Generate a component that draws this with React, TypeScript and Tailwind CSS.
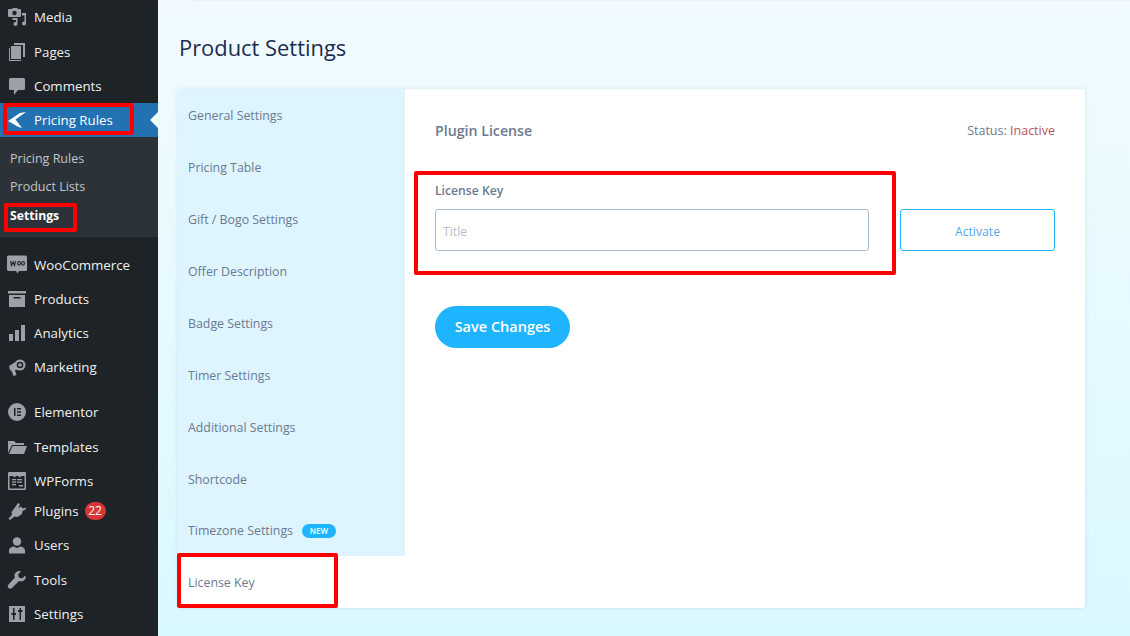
import React from "react";

const I = ({ children }: { children: React.ReactNode }) => (
  <svg viewBox="0 0 20 20" className="w-5 h-5 text-[#9ca1a7] shrink-0" fill="currentColor">{children}</svg>
);

const icons: Record<string, React.ReactNode> = {
  media: <I><path d="M2 2h3l1-1h4l1 1h2a1 1 0 0 1 1 1v6a1 1 0 0 1-1 1H2a1 1 0 0 1-1-1V3a1 1 0 0 1 1-1z" /><circle cx="7.5" cy="6" r="2.2" fill="#1d2327" /><path d="M15 6h4v10.500a2 2 0 1 1-1.500-1.900V8.500H15zM5.500 11h5v6a2 2 0 1 1-2-2 2 2 0 0 1 .5.100V13H5.500z" /></I>,
  pages: <I><path d="M7 1h11v14h-2V3H7z" /><path d="M4 4h10v13H4z" /><path d="M2 6h1v12h11v1H2z" /></I>,
  comments: <I><path d="M3.500 2h13A1.500 1.500 0 0 1 18 3.500v9a1.500 1.500 0 0 1-1.500 1.500H11l-4 5v-5H3.500A1.500 1.500 0 0 1 2 12.500v-9A1.500 1.500 0 0 1 3.500 2z" /></I>,
  pricing: <svg viewBox="0 0 20 20" className="w-5 h-5 shrink-0" fill="#fff"><path d="M13 3 L19 2 L8.500 9.500 L15 18 L11.500 17 L1 11 Z" /></svg>,
  woo: <svg viewBox="0 0 20 20" className="w-5 h-5 shrink-0"><path d="M1.500 0.500h17a1.500 1.500 0 0 1 1.500 1.500v12.500a1.500 1.500 0 0 1-1.500 1.500H12l-1.500 2.500L9 16H1.500A1.500 1.500 0 0 1 0 14.500V2A1.500 1.500 0 0 1 1.500 0.500z" fill="#9ca1a7" /><path d="M3.500 6l1 4.500 1.500-3.500 1.500 3.500 1-4.500" fill="none" stroke="#1d2327" strokeWidth="1.100" /><ellipse cx="12" cy="8.300" rx="1.400" ry="1.800" fill="none" stroke="#1d2327" strokeWidth="1.100" /><ellipse cx="16" cy="8.300" rx="1.400" ry="1.800" fill="none" stroke="#1d2327" strokeWidth="1.100" /></svg>,
  products: <I><path d="M1 2h18v2.500H1z" /><path fillRule="evenodd" d="M2 6h16v12H2zM6.500 8v1.500h7V8z" /></I>,
  analytics: <I><path d="M2 11h4v7H2zM8 7h4v11H8zM14 2h4v16h-4z" /></I>,
  marketing: <I><path d="M2 9l9-5.500 3 9-6 .5 1.500 5-3 1L4.500 14 3 13z" /><circle cx="13" cy="8" r="5.500" /><circle cx="13" cy="8" r="3.300" fill="#1d2327" /><circle cx="13" cy="8" r="1.800" /></I>,
  elementor: <I><path fillRule="evenodd" d="M10 1a9 9 0 1 0 0 18 9 9 0 0 0 0-18zM7 6h1.500v8H7zm3 0h4v1.500h-4zm0 3.250h4v1.500h-4zm0 3.250h4V14h-4z" /></I>,
  templates: <I><path d="M1 16V4h6l2 2h8v2H5zM5.500 9H20l-3 8H2z" /></I>,
  wpforms: <I><path fillRule="evenodd" d="M2 1h16a1 1 0 0 1 1 1v16a1 1 0 0 1-1 1H2a1 1 0 0 1-1-1V2a1 1 0 0 1 1-1zm.500 4v12.500h15V5h-3l-1.500 1.500L11 5H9L7.500 6.500 6 5zM5 8h4v1.200H5zm5 0h5v1.200h-5zM5 10.500h4v1.200H5zm5 0h5v1.200h-5zM5 13h4v1.200H5zm7 1h4v1.500h-4z" /></I>,
  plugins: <I><path d="M11 2l2 1-1.500 4 3-1.500 1 2L19 6.500l-.5 2-3 1.500-.5 3-4.500 3-3-.5L3 19l-1.500-1.500L5 14l-.5-3 3-4z" /></I>,
  users: <I><circle cx="10" cy="6.500" r="4.200" /><path d="M2 18.500v-3c0-2.500 3-4 5-4l3 1.500 3-1.500c2 0 5 1.500 5 4v3z" /></I>,
  tools: <I><path d="M18.500 5.500l-3.500 3-3-1-1-3 3-3.200c-2.500-.8-5 .2-6 2.200-.7 1.400-.6 3 0 4L1.500 14.500c-1 1-1 2.500 0 3.500s2.500 1 3.500 0L12 11c1.500.6 3 .6 4.500-.2 1.800-1 2.700-3 2-5.300z" /></I>,
  settings: <I><path fillRule="evenodd" d="M2 2h16v16H2zM6 4v5H4.500v2H6v5h1.500v-5H9V9H7.500V4zm6.500 0v2H11v2h1.500v8H14V8h1.500V6H14V4z" /></I>,
};

const Row = ({ icon, label, className = "", badge, h = "h-[34px]" }: { icon: string; label: string; className?: string; badge?: string; h?: string }) => (
  <div className={`flex items-center pl-[7px] gap-[7px] text-[13.3px] text-[#f0f0f1] ${h} ${className}`}>
    <span className="w-5 flex justify-center">{icons[icon]}</span>
    <span className="translate-y-px">{label}</span>
    {badge && <span className="-ml-px w-[21px] h-[18px] rounded-full bg-[#d63638] text-white text-[12px] flex items-center justify-center">{badge}</span>}
  </div>
);

const tabs = ["General Settings", "Pricing Table", "Gift / Bogo Settings", "Offer Description", "Badge Settings", "Timer Settings", "Additional Settings", "Shortcode"];

export default function App() {
  return (
    <div className="flex w-[1130px] h-[636px] overflow-hidden font-['Open_Sans',sans-serif]">
      <aside className="w-[158px] shrink-0 bg-[#1d2327] flex flex-col">
        <Row icon="media" label="Media" />
        <Row icon="pages" label="Pages" className="mt-[1px]" />
        <Row icon="comments" label="Comments" />
        <div className="relative h-[34px] bg-[#2271b1] flex items-center pl-[7px] gap-[7px] text-[13.3px] text-white">
          <span className="w-5 flex justify-center">{icons.pricing}</span>
          <span className="translate-y-px">Pricing Rules</span>
          <span className="absolute right-0 top-[9px] border-y-[8px] border-y-transparent border-r-[8px] border-r-[#f0faff]" />
          <span className="absolute left-[3px] top-0 w-[131px] h-[32px] border-[4px] border-[#ff0000] rounded-[2px]" />
        </div>
        <div className="h-[100px] bg-[#2c3338] pt-[8px] text-[12.5px] text-[#c3c4c7] flex flex-col">
          <div className="h-[28px] pl-[10px] flex items-center">Pricing Rules</div>
          <div className="h-[28px] pl-[10px] flex items-center">Product Lists</div>
          <div className="relative h-[28px] pl-[10px] flex items-center font-bold text-white text-[12.2px]">
            <span className="translate-y-px">Settings</span>
            <span className="absolute left-[4px] top-[2px] w-[73px] h-[29px] border-[4px] border-[#ff0000] rounded-[2px]" />
          </div>
        </div>
        <Row icon="woo" label="WooCommerce" className="mt-[11px]" />
        <Row icon="products" label="Products" />
        <Row icon="analytics" label="Analytics" />
        <Row icon="marketing" label="Marketing" />
        <Row icon="elementor" label="Elementor" className="mt-[11px]" />
        <Row icon="templates" label="Templates" className="mt-[1px]" />
        <Row icon="wpforms" label="WPForms" h="h-[30px]" className="mt-[2px]" />
        <Row icon="plugins" label="Plugins" badge="22" h="h-[30px]" />
        <Row icon="users" label="Users" h="h-[34px]" className="mt-[2px]" />
        <Row icon="tools" label="Tools" className="mt-[1px]" />
        <Row icon="settings" label="Settings" />
      </aside>

      <main className="relative flex-1 pl-[20px] bg-gradient-to-b from-[#f1fbff] to-[#daf8ff]">
        <div className="absolute left-[35px] top-0 right-0 h-px bg-[#e8f1f8]" />
        <h1 className="pt-[34px] h-[89px] pl-px text-[21.900px] leading-[27px] text-[#1c2c50]">Product Settings</h1>
        <div className="w-[907px] h-[519px] bg-white rounded-[3px] shadow-[0_0_4px_rgba(120,170,200,0.25)] flex">
          <nav className="w-[227px] shrink-0 flex flex-col text-[12.350px] text-[#6b7a90]">
            <div className="bg-[#def4ff] h-[467px] flex flex-col rounded-tl-[3px]">
              {tabs.map((t) => (
                <div key={t} className="h-[52px] pl-[10px] flex items-center"><span className="translate-y-px">{t}</span></div>
              ))}
              <div className="h-[51px] pl-[10px] flex items-center gap-[9px]">
                <span className="translate-y-px">Timezone Settings</span>
                <span className="w-[34px] h-[14px] rounded-full bg-[#1eb4ff] text-white text-[8px] font-semibold flex items-center justify-center">NEW</span>
              </div>
            </div>
            <div className="relative h-[52px] pl-[10px] flex items-center">
              <span className="translate-y-px">License Key</span>
              <span className="absolute -left-px -top-[3px] w-[161px] h-[55px] border-[4px] border-[#ff0000] rounded-[2px]" />
            </div>
          </nav>
          <section className="flex-1 px-[30px] flex flex-col">
            <div className="h-[82px] flex items-center justify-between">
              <span className="translate-y-px text-[14.200px] font-semibold text-[#6b7a90]">Plugin License</span>
              <span className="translate-y-px text-[12.500px] text-[#6b7a90]">Status: <span className="text-[#b9545c]">Inactive</span></span>
            </div>
            <div className="relative">
              <label className="block text-[12.200px] font-semibold text-[#6b7a90] h-[38px] leading-[40px]">License Key</label>
              <div className="flex justify-between">
                <div className="w-[434px] h-[42px] border border-[#aebcd0] rounded-[3px] pl-[7px] pt-[4px] flex items-center text-[12.200px] text-[#b4bccb]">Title</div>
                <button className="w-[155px] h-[42px] border border-[#1eb4ff] rounded-[3px] pt-[4px] text-[12.200px] text-[#55a7ee]">Activate</button>
              </div>
              <span className="absolute -left-[21px] top-0 w-[482px] h-[104px] border-[4px] border-[#ff0000] rounded-[2px]" />
            </div>
            <button className="mt-[55px] w-[135px] h-[42px] rounded-full bg-[#1eb4ff] text-white text-[14.500px] font-semibold">Save Changes</button>
          </section>
        </div>
      </main>
    </div>
  );
}
